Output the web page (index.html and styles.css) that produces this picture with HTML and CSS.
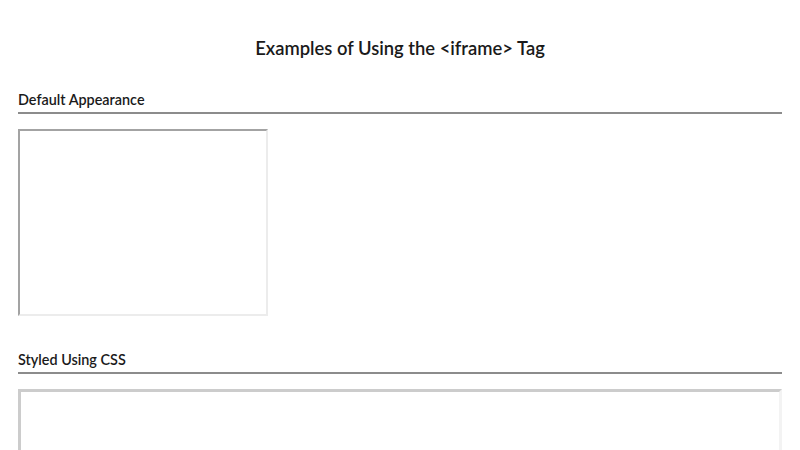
FILE: index.html
```html
<!DOCTYPE html>
<html lang="en">
<head>
<meta charset="utf-8">
<title>iframe examples</title>
<link rel="stylesheet" href="styles.css">
</head>
<body>
<main class="page">
  <h1 class="title">Examples of Using the &lt;iframe&gt; Tag</h1>
  <section class="example">
    <h2 class="heading">Default Appearance</h2>
    <iframe class="frame-default" title="Default iframe"></iframe>
  </section>
  <section class="example example-styled">
    <h2 class="heading">Styled Using CSS</h2>
    <iframe class="frame-styled" title="Styled iframe"></iframe>
  </section>
</main>
</body>
</html>
```

FILE: styles.css
```css
html, body {
  margin: 0;
  padding: 0;
  background: #fff;
}
body {
  font-family: Lato, "Open Sans", sans-serif;
  color: #1a1a1a;
}
.page {
  padding: 37px 18px 0;
}
.title {
  margin: 0 0 32px;
  font-size: 18.4px;
  line-height: 22px;
  font-weight: 600;
  text-align: center;
}
.heading {
  margin: 0 0 15px;
  padding-bottom: 4px;
  font-size: 14.4px;
  line-height: 17px;
  font-weight: 600;
  border-bottom: 2px solid #8c8c8c;
}
.frame-default {
  display: block;
  width: 246px;
  height: 183px;
  border: 2px solid;
  border-color: #a3a3a3 #ececec #ececec #a3a3a3;
  margin: 0;
}
.example-styled {
  margin-top: 35px;
}
.frame-styled {
  display: block;
  box-sizing: border-box;
  width: 100%;
  height: 200px;
  border: 3px solid #cccccc;
  border-right-color: #f3f3f3;
  margin: 0;
}
```
